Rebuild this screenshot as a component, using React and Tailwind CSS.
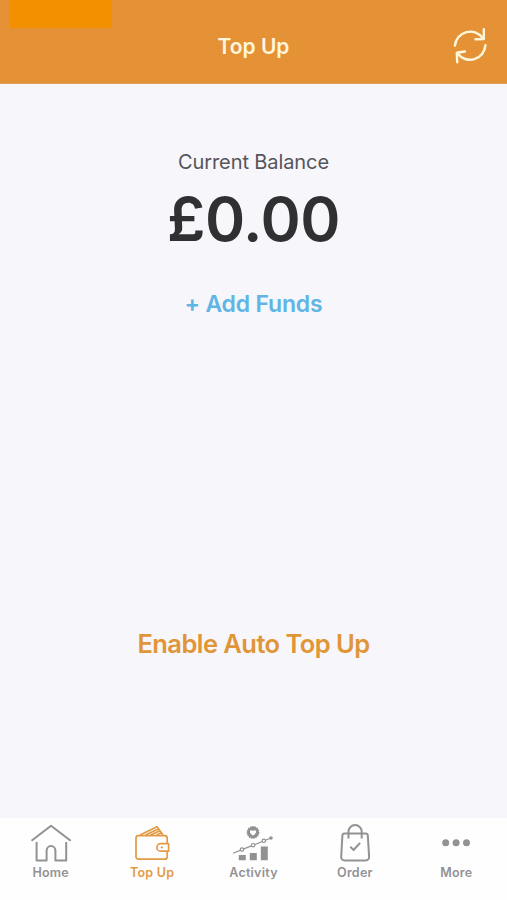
const iconProps = {
  viewBox: '0 0 42 40',
  fill: 'none',
  stroke: 'currentColor',
  strokeWidth: 2,
  strokeLinejoin: 'round',
  className: 'block w-[42px] h-10',
};

function HomeIcon() {
  return (
    <svg {...iconProps}>
      <path d="M1.5 18.8 21 3.8l19.7 15" />
      <path d="M6.6 20v18.5h10v-10a4.4 4.4 0 0 1 8.8 0v10h10.8V20" />
    </svg>
  );
}

function WalletIcon() {
  return (
    <svg {...iconProps} strokeWidth={1.7}>
      <rect x="5" y="13.6" width="31.2" height="23.6" rx="2.5" />
      <path d="M9 13 26 4.7 32 13M14.5 13l12.7-6M19.5 13l9.5-4.2M25.5 13l4.5-2" />
      <path d="M37.6 21.7h-8a3.7 3.7 0 0 0 0 7.4h8z" fill="#fff" />
      <circle cx="30.8" cy="25.4" r="1.1" fill="currentColor" stroke="none" />
    </svg>
  );
}

function ActivityIcon() {
  return (
    <svg {...iconProps} strokeWidth={1.2}>
      <circle cx="21" cy="10.4" r="5.7" fill="currentColor" strokeWidth="1.4" strokeDasharray="1.6 0.7" />
      <path d="M21 13.6c-5.4-3.6-2.4-7 0-4.6 2.4-2.4 5.4 1 0 4.6z" fill="#fff" stroke="none" />
      <path d="M1 31.2 39 16" />
      <g fill="#fff">
        <circle cx="10" cy="27.5" r="1.7" />
        <circle cx="21" cy="23.2" r="1.7" />
        <circle cx="31.8" cy="18.8" r="1.7" />
      </g>
      <g fill="currentColor" stroke="none">
        <circle cx="39" cy="16" r="1.8" />
        <path d="M6.8 33h7v5.3h-7zM17.8 31h7v7.3h-7zM28.8 24.6h7v13.7h-7z" />
      </g>
    </svg>
  );
}

function BagIcon() {
  return (
    <svg {...iconProps}>
      <path d="M10.5 11.4h21.2c1.2 0 2 .7 2.1 2l1.3 21.2c.2 2.3-1.3 3.8-3.6 3.8H10.8c-2.3 0-3.8-1.5-3.6-3.8l1.2-21.2c.1-1.3.9-2 2.1-2z" />
      <path d="M14.5 16.5V9.6a6.6 6.6 0 0 1 13.2 0v6.9" />
      <path d="m16.3 24.8 3.3 3.2 6.5-7.2" />
    </svg>
  );
}

function MoreIcon() {
  return (
    <svg {...iconProps} fill="currentColor" stroke="none">
      <circle cx="10.7" cy="20.8" r="3.5" />
      <circle cx="21.1" cy="20.8" r="3.5" />
      <circle cx="31.5" cy="20.8" r="3.5" />
    </svg>
  );
}

function RefreshIcon() {
  return (
    <svg
      viewBox="0 0 36 38"
      fill="none"
      stroke="currentColor"
      strokeWidth="2.4"
      strokeLinecap="round"
      strokeLinejoin="round"
      className="block w-9 h-[38px]"
    >
      <path d="M2.9 18.6A15.4 15.4 0 0 1 31 11.4M33.4 18.3A15.4 15.4 0 0 1 5.6 26.5" />
      <path d="M31.8 2.2v9.8l-8.3.2M5.2 35.2l-.4-9.4 8.2-1.3" />
    </svg>
  );
}

const tabs = [
  { name: 'Home', icon: HomeIcon },
  { name: 'Top Up', icon: WalletIcon, active: true },
  { name: 'Activity', icon: ActivityIcon },
  { name: 'Order', icon: BagIcon },
  { name: 'More', icon: MoreIcon },
];

export default function App() {
  return (
    <div className="relative flex flex-col h-[900px] w-[507px] overflow-hidden bg-[#f6f6fb] font-['Inter',sans-serif]">
      <header className="relative h-[84px] shrink-0 bg-[#e49235] border-b border-[#dfa060] text-[#fff6dc]">
        <div className="absolute left-[10px] top-0 w-[102px] h-7 bg-[#f39000]" />
        <h1 className="pt-8 text-center text-[21px] leading-[30px] font-semibold">Top Up</h1>
        <button className="absolute right-[19px] top-[27px]" aria-label="Refresh">
          <RefreshIcon />
        </button>
      </header>

      <main className="flex flex-1 flex-col items-center">
        <p className="mt-[63px] text-[20px] leading-[30px] tracking-[-0.1px] text-[#55555a]">Current Balance</p>
        <p className="mt-[6px] text-[61px] leading-[72px] font-[560] tracking-[-0.4px] text-[#303033]">£0.00</p>
        <button className="mt-[33px] text-[23px] leading-8 font-[560] tracking-[-0.2px] text-[#5fb5e5]">+ Add Funds</button>
        <button className="mt-[306px] text-[25.5px] leading-9 font-[580] tracking-[-0.55px] text-[#e09537]">
          Enable Auto Top Up
        </button>
      </main>

      <nav className="grid grid-cols-5 h-[82px] shrink-0 bg-[#fefefe] pt-1">
        {tabs.map(({ name, icon: Icon, active }) => (
          <button
            key={name}
            className={`flex flex-col items-center justify-start ${active ? 'text-[#e39a45]' : 'text-[#929294]'}`}
          >
            <Icon />
            <span className="mt-[3px] text-[12.5px] leading-4 font-[560] tracking-[0.25px]">{name}</span>
          </button>
        ))}
      </nav>
    </div>
  );
}
